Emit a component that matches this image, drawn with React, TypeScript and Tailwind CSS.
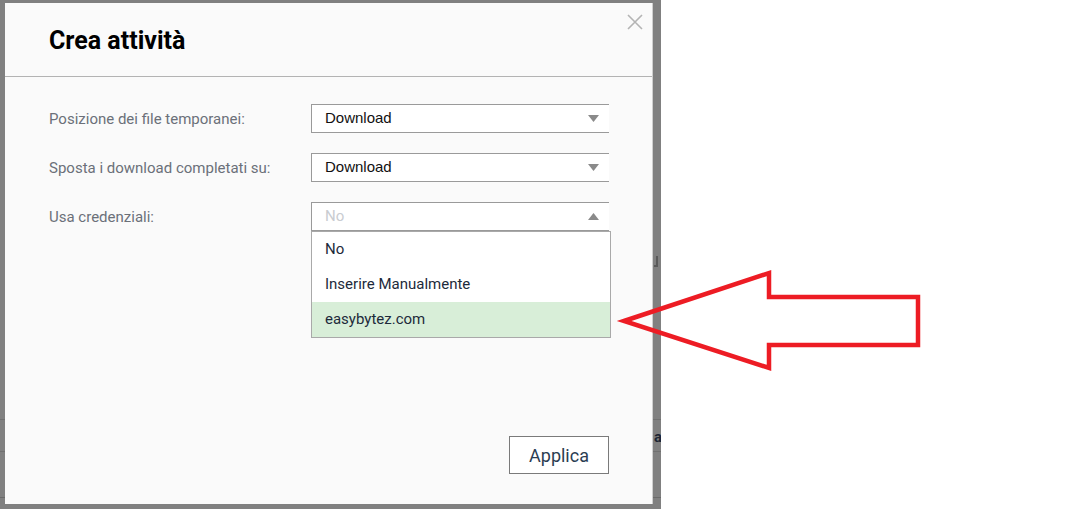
import React from "react";

const Arrow = ({ up }: { up?: boolean }) => (
  <svg width="11" height="7" viewBox="0 0 11 7" className="shrink-0">
    {up ? (
      <polygon points="0,7 11,7 5.5,0" fill="#8a8a8a" />
    ) : (
      <polygon points="0,0 11,0 5.5,7" fill="#8a8a8a" />
    )}
  </svg>
);

function Row({
  label,
  children,
}: {
  label: string;
  children: React.ReactNode;
}) {
  return (
    <div className="flex items-center h-[28px]">
      <div className="w-[262px] pt-[3px] text-[15px] text-[#6b7079]">{label}</div>
      <div className="relative">{children}</div>
    </div>
  );
}

export default function App() {
  return (
    <div
      className="relative flex w-[1065px] h-[509px] bg-white overflow-hidden"
      style={{ fontFamily: "Roboto, 'Liberation Sans', sans-serif" }}
    >
      <div className="relative w-[661px] h-full bg-[#808080] pl-[5px] pt-[3px] shrink-0 overflow-hidden">
        {/* background page seen through overlay */}
        <div className="absolute left-0 right-0 top-[419px] h-px bg-[#707070]" />
        <div className="absolute left-0 right-0 top-[451px] h-px bg-[#707070]" />
        <div className="absolute left-0 right-0 top-[497px] h-px bg-[#6a6a6a]" />
        <div className="absolute left-[654px] top-[256px] w-[4px] h-[11px] border-r-2 border-b-2 border-[#5a5a5a]" />
        <div className="absolute left-[654px] top-[430px] text-[15px] font-bold text-[#1c2533] leading-none">al</div>

        <div className="relative z-10 w-[648px] h-[501px] bg-[#fafafa] border-r border-[#cfcfcf] flex flex-col">
          <button className="absolute right-[8px] top-[10px] w-[18px] h-[18px]">
            <svg width="18" height="18" viewBox="0 0 18 18">
              <path d="M2 2 L16 16 M16 2 L2 16" stroke="#b4b4b4" strokeWidth="1.6" fill="none" />
            </svg>
          </button>

          <div className="h-[74px] border-b border-[#b3b3b3] flex items-center pl-[44px] pt-[1px] box-border">
            <h1 className="text-[25px] font-bold text-black leading-none">Crea attività</h1>
          </div>

          <div className="pl-[44px] pt-[27px] flex flex-col gap-[21px]">
            <Row label="Posizione dei file temporanei:">
              <div className="w-[298px] h-[29px] bg-white border-y border-l border-[#9a9a9a] flex items-center justify-between pl-[13px] pr-[10px]">
                <span className="text-[15px] text-[#111]" style={{ fontFamily: "'Liberation Sans', Arial, sans-serif" }}>
                  Download
                </span>
                <Arrow />
              </div>
            </Row>
            <Row label="Sposta i download completati su:">
              <div className="w-[298px] h-[29px] bg-white border-y border-l border-[#9a9a9a] flex items-center justify-between pl-[13px] pr-[10px]">
                <span className="text-[15px] text-[#111]" style={{ fontFamily: "'Liberation Sans', Arial, sans-serif" }}>
                  Download
                </span>
                <Arrow />
              </div>
            </Row>
            <Row label="Usa credenziali:">
              <div className="w-[298px] h-[29px] bg-white border-y border-l border-[#9a9a9a] flex items-center justify-between pl-[13px] pr-[10px]">
                <span className="text-[15px] text-[#c9ccd1]">No</span>
                <Arrow up />
              </div>
              <div className="absolute left-0 top-[29px] w-[300px] bg-white border border-[#a9a9a9] z-20 flex flex-col">
                <div className="h-[35px] flex items-center pl-[13px] text-[15px] text-[#1d2a3b]">No</div>
                <div className="h-[35px] flex items-center pl-[13px] text-[15px] text-[#1d2a3b]">Inserire Manualmente</div>
                <div className="h-[35px] flex items-center pl-[13px] text-[15px] text-[#1d2a3b] bg-[#d8eed8]">easybytez.com</div>
              </div>
            </Row>
          </div>

          <div className="mt-auto flex justify-end pr-[43px] pb-[30px]">
            <button className="w-[100px] h-[38px] bg-white border border-[#7a7a7a] text-[18px] text-[#2b3d52] flex items-center justify-center">
              Applica
            </button>
          </div>
        </div>
      </div>

      <svg className="absolute left-0 top-0 z-30 pointer-events-none" width="1065" height="509">
        <polygon
          points="624,321 769,273 769,297 918,297 918,345 769,345 769,368"
          fill="none"
          stroke="#ed1c24"
          strokeWidth="4.5"
          strokeLinejoin="miter"
        />
      </svg>
    </div>
  );
}
